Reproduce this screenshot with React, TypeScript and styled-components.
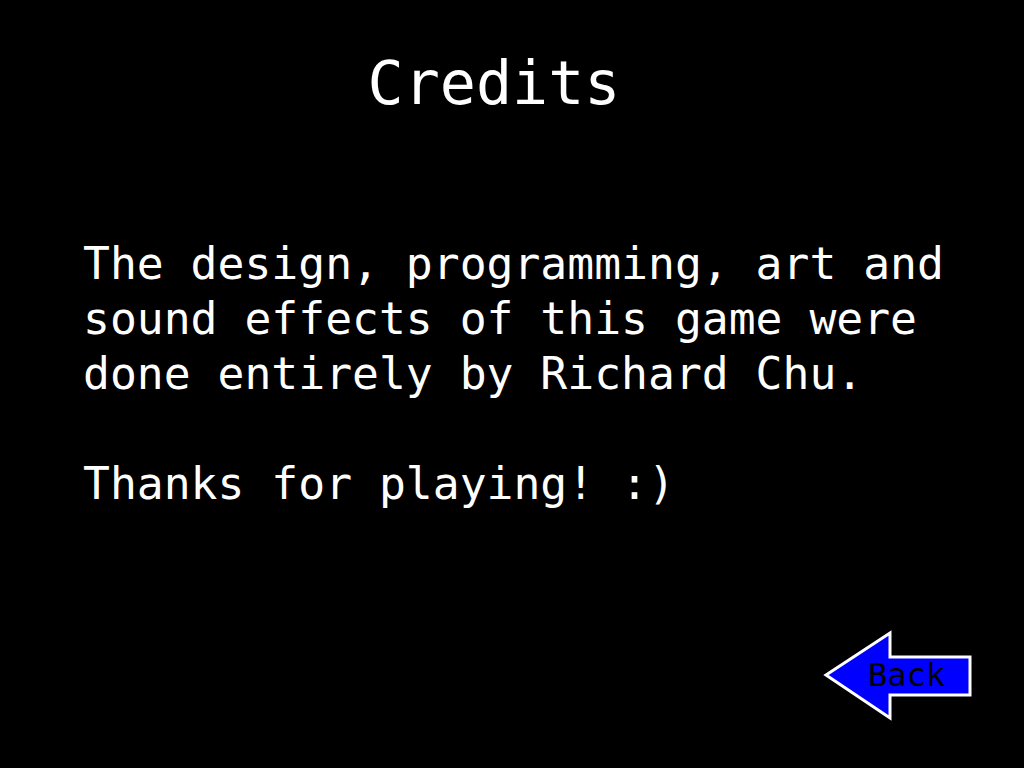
import React from "react";
import styled, { createGlobalStyle } from "styled-components";

const Global = createGlobalStyle`
  html, body { margin: 0; padding: 0; background: #000; }
  body { font-family: "DejaVu Sans Mono", "Liberation Mono", monospace; color: #fff; }
`;

const Screen = styled.main`
  width: 1024px;
  height: 768px;
  box-sizing: border-box;
  display: flex;
  flex-direction: column;
  padding: 48px 0 0 83px;
  overflow: hidden;
`;

const Title = styled.h1`
  margin: 0;
  padding-right: 119px;
  text-align: center;
  font-weight: normal;
  font-size: 60px;
  line-height: 70px;
  letter-spacing: 0;
`;

const Body = styled.div`
  margin-top: 119px;
  display: flex;
  flex-direction: column;
  gap: 55px;
`;

const Para = styled.p`
  margin: 0;
  font-size: 44.7px;
  line-height: 55px;
  white-space: pre;
`;

const Footer = styled.div`
  margin-top: auto;
  display: flex;
  justify-content: flex-end;
  padding: 0 51px 46px 0;
`;

const BackButton = styled.button`
  position: relative;
  width: 150px;
  height: 92px;
  padding: 0;
  border: 0;
  background: transparent;
  cursor: pointer;
  svg { display: block; }
`;

const BackLabel = styled.span`
  position: absolute;
  left: 45px;
  top: 26px;
  font-family: "DejaVu Sans Mono", "Liberation Mono", monospace;
  font-size: 32px;
  line-height: 38px;
  color: #000;
`;

export default function App() {
  return (
    <>
      <Global />
      <Screen>
        <Title>Credits</Title>
        <Body>
          <Para>{"The design, programming, art and\nsound effects of this game were\ndone entirely by Richard Chu."}</Para>
          <Para>{"Thanks for playing! :)"}</Para>
        </Body>
        <Footer>
          <BackButton aria-label="Back">
            <svg width="150" height="92" viewBox="0 0 150 92">
              <polygon
                points="3,45 67,3 67,27 147,27 147,65 67,65 67,88"
                fill="#0000ff"
                stroke="#fff"
                strokeWidth="3"
                strokeLinejoin="miter"
              />
            </svg>
            <BackLabel>Back</BackLabel>
          </BackButton>
        </Footer>
      </Screen>
    </>
  );
}
